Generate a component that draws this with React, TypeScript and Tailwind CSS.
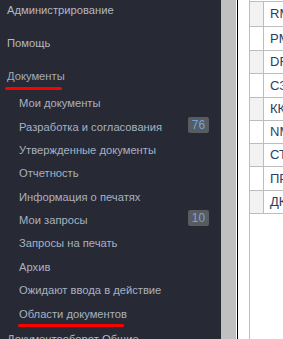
const TOP = ["Администрирование", "Помощь"];

const SUB: { label: string; badge?: string }[] = [
  { label: "Мои документы" },
  { label: "Разработка и согласования", badge: "76" },
  { label: "Утвержденные документы" },
  { label: "Отчетность" },
  { label: "Информация о печатях" },
  { label: "Мои запросы", badge: "10" },
  { label: "Запросы на печать" },
  { label: "Архив" },
  { label: "Ожидают ввода в действие" },
];

const ROWS = [
  { code: "RM", h: "h-[25px]", alt: true },
  { code: "PM", h: "h-[24px]", alt: false },
  { code: "DF", h: "h-[23px]", alt: true },
  { code: "СЗ", h: "h-[24px]", alt: false },
  { code: "КК", h: "h-[23px]", alt: true },
  { code: "NM", h: "h-[23px]", alt: false },
  { code: "СТ", h: "h-[23px]", alt: true },
  { code: "ПР", h: "h-[24px]", alt: false },
  { code: "ДК", h: "h-[23px]", alt: true },
];

export default function App() {
  return (
    <div
      className="flex h-[339px] w-[283px] overflow-hidden bg-white text-[11.2px]"
      style={{ fontFamily: '"Liberation Sans", Arial, sans-serif' }}
    >
      <aside className="w-[221px] shrink-0 overflow-hidden bg-[#272a35]">
        {TOP.map((t, i) => (
          <div
            key={t}
            className={`h-[20px] leading-[20px] pl-[7px] text-[#b4b8c1] ${i > 0 ? "mt-[13px]" : ""}`}
          >
            {t}
          </div>
        ))}
        <div className="mt-[13px] h-[20px] leading-[20px] pl-[7px] text-[#a3acbb]">Документы</div>
        <div className="mt-[1px] ml-[5px] h-[3px] w-[57px] rounded-full bg-[#ff0000]" />
        <div className="mt-[2.33px]">
          {SUB.map((s) => (
            <div key={s.label} className="h-[23.33px] flex items-start justify-between pl-[19px] pr-[12px]">
              <span className="leading-[23.33px] text-[#a9b1c0] whitespace-nowrap">{s.label}</span>
              {s.badge && (
                <span className="mt-[1px] h-[16px] w-[21px] rounded-[2px] bg-[#585b60] text-center text-[12px] leading-[16px] text-[#6fa6dc]">
                  {s.badge}
                </span>
              )}
            </div>
          ))}
          <div className="pt-[1.67px] h-[21.67px] leading-[20px] pl-[19px] text-[#a9b1c0]">Области документов</div>
          <div className="ml-[18px] h-[3px] w-[106px] rounded-full bg-[#ff0000]" />
        </div>
        <div className="mt-[2px] h-[20px] leading-[20px] pl-[7px] text-[#b4b8c1] whitespace-nowrap">
          Документооборот Общие
        </div>
      </aside>
      <div className="w-[15px] shrink-0 bg-[#c0c0c0]" />
      <div className="w-[1px] shrink-0 bg-white" />
      <main className="flex-1 border-l border-black bg-white pl-[11px]">
        <div className="h-full border-l border-[#bdbdbd]">
          <div className="h-[1px] border-b border-[#bdbdbd] box-content" />
          {ROWS.map((r) => (
            <div key={r.code} className={`${r.h} flex border-b border-[#bdbdbd]`}>
              <div className={`w-[14px] shrink-0 border-r border-[#bdbdbd] ${r.alt ? "bg-[#f2f2f2]" : "bg-white"}`} />
              <div className="flex items-center pl-[6px] text-[13px] text-[#2b3d63] whitespace-nowrap">{r.code}</div>
            </div>
          ))}
        </div>
      </main>
    </div>
  );
}
